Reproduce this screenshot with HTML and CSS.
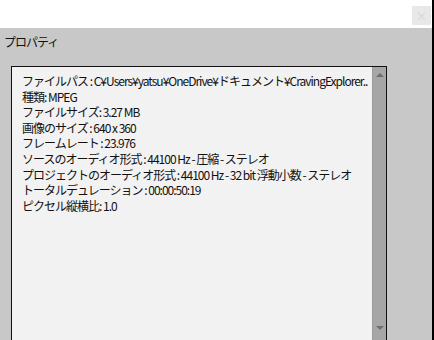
FILE: index.html
```html
<!DOCTYPE html>
<html lang="ja">
<head>
    <meta charset="UTF-8">
    <title>プロパティ</title>
    <link rel="stylesheet" href="styles.css">
</head>
<body>
    <div class="window">
        <div class="titlebar">
            <div class="close-btn">×</div>
        </div>

        <div class="panel">
            <div class="heading">プロパティ</div>

            <div class="info-box">
                <div class="info-list">
                    <div class="info-row">ファイルパス : C¥Users¥yatsu¥OneDrive¥ドキュメント¥CravingExplorer..</div>
                    <div class="info-row">種類: MPEG</div>
                    <div class="info-row">ファイルサイズ: 3.27 MB</div>
                    <div class="info-row">画像のサイズ : 640 x 360</div>
                    <div class="info-row">フレームレート : 23.976</div>
                    <div class="info-row">ソースのオーディオ形式 : 44100 Hz - 圧縮 - ステレオ</div>
                    <div class="info-row">プロジェクトのオーディオ形式 : 44100 Hz - 32 bit 浮動小数 - ステレオ</div>
                    <div class="info-row">トータルデュレーション : 00:00:50:19</div>
                    <div class="info-row">ピクセル縦横比: 1.0</div>
                </div>
                <div class="scrollbar">
                    <span class="arrow arrow-up"></span>
                    <span class="arrow arrow-down"></span>
                </div>
            </div>
        </div>
    </div>
</body>
</html>
```

FILE: styles.css
```css
:root {
    --panel: #c8c8c8;
    --box-bg: #f2f2f2;
    --scroll: #a6a6a6;
    --arrow: #6e6e6e;
    --text: #111111;
}

* {
    margin: 0;
    padding: 0;
    box-sizing: border-box;
}

html, body {
    width: 434px;
    height: 340px;
    overflow: hidden;
}

body {
    background: var(--panel);
    color: var(--text);
    font-family: "Noto Sans CJK JP", "Noto Sans", sans-serif;
    font-size: 12px;
}

.window {
    height: 100%;
    display: flex;
    flex-direction: column;
    border-right: 2px solid #000;
}

.titlebar {
    height: 28px;
    flex: none;
    background: #fff;
    display: flex;
    justify-content: flex-end;
    align-items: flex-start;
    padding: 6px 1px 0 0;
}

.close-btn {
    width: 19px;
    height: 19px;
    background: #e8e8e8;
    color: #d6d6d6;
    font-size: 12px;
    line-height: 19px;
    text-align: center;
}

.panel {
    flex: 1;
    display: flex;
    flex-direction: column;
    min-height: 0;
}

.heading {
    padding: 6px 0 0 4px;
    height: 38px;
    line-height: 16px;
    letter-spacing: -1px;
}

.info-box {
    flex: 1;
    width: 376px;
    margin-left: 11px;
    border: 1px solid #111;
    border-bottom: none;
    display: flex;
}

.info-list {
    flex: 1;
    background: var(--box-bg);
    padding: 6px 0 0 10px;
    overflow: hidden;
}

.info-row {
    height: 15.6px;
    line-height: 15.6px;
    white-space: nowrap;
    letter-spacing: -1px;
}

.scrollbar {
    width: 14px;
    flex: none;
    background: var(--scroll);
    border-left: 1px solid #9a9a9a;
    display: flex;
    flex-direction: column;
    justify-content: space-between;
    align-items: center;
    padding: 6px 0 10px;
}

.arrow {
    width: 0;
    height: 0;
    border-left: 4px solid transparent;
    border-right: 4px solid transparent;
}

.arrow-up {
    border-bottom: 4px solid var(--arrow);
}

.arrow-down {
    border-top: 4px solid var(--arrow);
}
```
